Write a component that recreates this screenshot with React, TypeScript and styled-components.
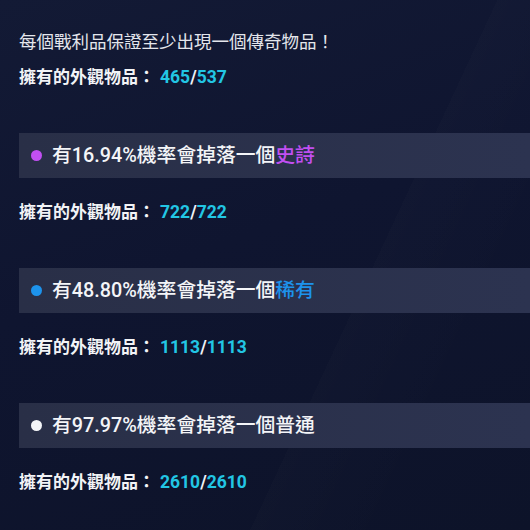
import React from 'react'
import styled, { createGlobalStyle } from 'styled-components'

const GlobalStyle = createGlobalStyle`
  html, body {
    margin: 0;
    padding: 0;
    background: #10162e;
  }
  body {
    font-family: Roboto, "Noto Sans CJK TC", sans-serif;
  }
`

const Page = styled.div`
  width: 530px;
  height: 530px;
  overflow: hidden;
  box-sizing: border-box;
  padding: 29px 0 0 19px;
  background:
    linear-gradient(115deg, rgba(255, 255, 255, 0) 64%, rgba(255, 255, 255, 0.01) 64%, rgba(255, 255, 255, 0) 82%),
    linear-gradient(160deg, #131a35 0%, #0f1530 45%, #0d1329 100%);
  color: #ffffff;
`

const Intro = styled.div`
  font-family: "Noto Sans CJK TC", sans-serif;
  font-size: 17.5px;
  line-height: 24px;
  height: 24px;
  color: #e4e6ec;
`

const Owned = styled.div<{ $top: number }>`
  margin-top: ${(p) => p.$top}px;
  height: 24px;
  font-size: 17px;
  line-height: 24px;
  font-weight: 700;
  color: #f2f3f6;
  white-space: nowrap;
`

const Label = styled.span`
  font-family: "Noto Sans CJK TC", sans-serif;
  margin-right: 5px;
`

const Count = styled.span`
  color: #22c6e4;
  font-size: 17.5px;
  line-height: 1;
`

const Slash = styled.span`
  color: #f2f3f6;
  font-size: 17.5px;
  line-height: 1;
`

const Section = styled.section`
  margin-top: 45px;
`

const Bar = styled.div`
  height: 45px;
  display: flex;
  align-items: center;
  gap: 10px;
  padding-left: 12px;
  background: linear-gradient(90deg, #292f47 0%, #2c3350 100%);
`

const Dot = styled.span<{ $color: string }>`
  width: 11px;
  height: 11px;
  border-radius: 50%;
  background: ${(p) => p.$color};
  flex-shrink: 0;
`

const Chance = styled.div`
  font-size: 19.8px;
  font-weight: 500;
  color: #f4f5f8;
  line-height: 24px;
`

const Rarity = styled.span<{ $color: string }>`
  color: ${(p) => p.$color};
`

const OwnedLine = ({ have, total, top }: { have: number; total: number; top: number }) => (
  <Owned $top={top}>
    <Label>擁有的外觀物品：</Label>
    <Count>{have}</Count>
    <Slash>/</Slash>
    <Count>{total}</Count>
  </Owned>
)

const drops = [
  { rate: '16.94', name: '史詩', color: '#c14ff2', have: 722, total: 722 },
  { rate: '48.80', name: '稀有', color: '#1d93ec', have: 1113, total: 1113 },
  { rate: '97.97', name: '普通', color: '#f4f5f8', have: 2610, total: 2610 },
]

export default function App() {
  return (
    <>
      <GlobalStyle />
      <Page>
        <Intro>每個戰利品保證至少出現一個傳奇物品！</Intro>
        <OwnedLine have={465} total={537} top={11} />
        {drops.map((d) => (
          <Section key={d.name}>
            <Bar>
              <Dot $color={d.color} />
              <Chance>
                有{d.rate}%機率會掉落一個<Rarity $color={d.color}>{d.name}</Rarity>
              </Chance>
            </Bar>
            <OwnedLine have={d.have} total={d.total} top={21} />
          </Section>
        ))}
      </Page>
    </>
  )
}
